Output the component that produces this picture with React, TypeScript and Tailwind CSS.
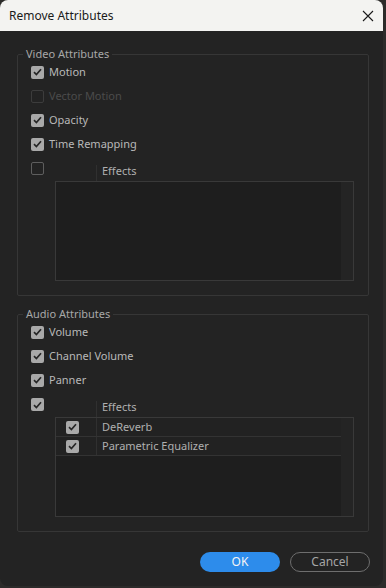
import React from "react";

function Check({ checked, disabled }: { checked?: boolean; disabled?: boolean }) {
  if (checked) {
    return (
      <div className="w-[13px] h-[13px] rounded-[2px] bg-[#a9a9a9] flex items-center justify-center shrink-0">
        <svg width="9" height="8" viewBox="0 0 9 8">
          <path d="M1 4.2 L3.4 6.5 L8 1.3" stroke="#262626" strokeWidth="1.7" fill="none" />
        </svg>
      </div>
    );
  }
  return (
    <div
      className={
        disabled
          ? "w-[13px] h-[13px] rounded-[2px] border border-[#3c3c3c] shrink-0"
          : "w-[13px] h-[13px] rounded-[2px] border border-[#5e5e5e] shrink-0"
      }
    />
  );
}

function Row({ label, checked, disabled }: { label: string; checked?: boolean; disabled?: boolean }) {
  return (
    <div className="h-[24px] flex items-center gap-[5px]">
      <Check checked={checked} disabled={disabled} />
      <span className={disabled ? "text-[#4b4b4b]" : "text-[#b9b9b9]"}>{label}</span>
    </div>
  );
}

function EffectsHeader({ checked }: { checked?: boolean }) {
  return (
    <div className="h-[25px] flex items-start">
      <div className="w-[65px] pt-[6px]">
        <Check checked={checked} />
      </div>
      <div className="w-px h-[16px] mt-[9px] bg-[#303030]" />
      <span className="ml-[5px] mt-[7px] text-[#b0b0b0] leading-[15px]">Effects</span>
    </div>
  );
}

function ListBox({ rows }: { rows: string[] }) {
  return (
    <div className="ml-[32px] mr-[14px] h-[100px] border border-[#393939] bg-[#1e1e1e] flex">
      <div className="flex-1 flex flex-col">
        {rows.map((r) => (
          <div key={r} className="h-[19px] flex items-center border-b border-[#333333] bg-[#222222]">
            <div className="w-[40px] flex justify-end pr-[17px] h-full items-center">
              <Check checked />
            </div>
            <div className="w-px h-full bg-[#303030]" />
            <span className="ml-[5px] text-[#b0b0b0]">{r}</span>
          </div>
        ))}
      </div>
      <div className="w-[12px] bg-[#242424]" />
    </div>
  );
}

export default function App() {
  return (
    <div
      className="w-[386px] h-[588px] bg-[#2c2b2a]"
      style={{ fontFamily: '"Noto Sans", "Open Sans", sans-serif' }}
    >
      <div className="w-[383px] h-[586px] rounded-[8px] overflow-hidden bg-[#232323] flex flex-col">
        <div className="h-[31px] bg-[#f3f3f1] flex items-center justify-between pl-[9px] pr-[9px] shrink-0">
          <span className="text-[12px] text-[#1a1a1a]">Remove Attributes</span>
          <svg width="12" height="12" viewBox="0 0 12 12">
            <path d="M1 1 L11 11 M11 1 L1 11" stroke="#1a1a1a" strokeWidth="1.1" />
          </svg>
        </div>
        <div className="flex-1 text-[11px] px-[17px] pt-[17px]">
          <fieldset className="border border-[#363636] rounded-[2px] pl-[5px] pb-[14px] w-[352px]">
            <legend className="px-[3px] leading-[12px] text-[#a8a8a8] text-[11px]">Video Attributes</legend>
            <div className="pl-[8px]">
              <Row label="Motion" checked />
              <Row label="Vector Motion" disabled />
              <Row label="Opacity" checked />
              <Row label="Time Remapping" checked />
              <EffectsHeader />
            </div>
            <ListBox rows={[]} />
          </fieldset>
          <fieldset className="mt-[12px] border border-[#363636] rounded-[2px] pl-[5px] pb-[14px] w-[352px]">
            <legend className="px-[3px] leading-[12px] text-[#a8a8a8] text-[11px]">Audio Attributes</legend>
            <div className="pl-[8px]">
              <Row label="Volume" checked />
              <Row label="Channel Volume" checked />
              <Row label="Panner" checked />
              <EffectsHeader checked />
            </div>
            <ListBox rows={["DeReverb", "Parametric Equalizer"]} />
          </fieldset>
          <div className="flex justify-end gap-[10px] mt-[20px] mr-[-4px]">
            <button className="w-[80px] h-[20px] rounded-full bg-[#2d8ceb] text-[#f4f4f4] text-[12px] leading-none">
              OK
            </button>
            <button className="w-[80px] h-[20px] rounded-full border border-[#6e6e6e] text-[#a6a6a6] text-[12px] leading-none">
              Cancel
            </button>
          </div>
        </div>
      </div>
    </div>
  );
}
